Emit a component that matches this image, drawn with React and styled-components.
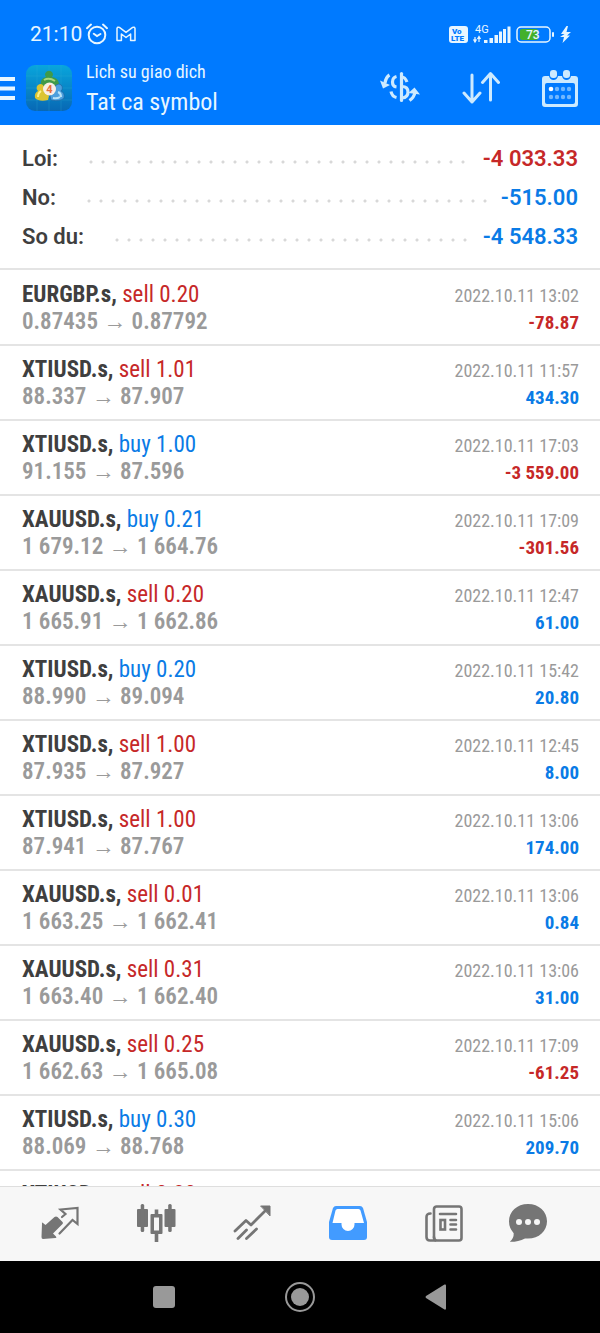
import React from 'react';
import styled, { createGlobalStyle } from 'styled-components';

const condensed = '"Roboto Condensed", "Liberation Sans Narrow", Roboto, sans-serif';
const colors = { header: '#007aff', red: '#c62828', blue: '#0a7be6', ink: '#3f3f3f', grey: '#9a9a9a', icon: '#757575', line: '#e4e4e4' };

const GlobalStyle = createGlobalStyle`
  * { box-sizing: border-box; }
  body { margin: 0; background: #fff; font-family: Roboto, sans-serif; }
  button { border: 0; padding: 0; margin: 0; background: none; color: inherit; font: inherit; cursor: pointer; }
  svg { display: block; }
`;

const Screen = styled.div`
  display: flex;
  flex-direction: column;
  height: 100vh;
  overflow: hidden;
`;

const Header = styled.header`
  flex: none;
  background: ${colors.header};
  color: #e8f6ff;
  height: 125px;
  padding-top: 22px;
`;

const StatusBar = styled.div`
  display: flex;
  align-items: center;
  justify-content: space-between;
  height: 24px;
  padding: 0 29px 0 30px;
`;

const StatusGroup = styled.div`
  display: flex;
  align-items: center;
  gap: ${(p) => p.$gap}px;
`;

const Clock = styled.time`
  margin-right: -4px;
  font-size: 21px;
  line-height: 24px;
`;

const AppBar = styled.div`
  display: flex;
  align-items: center;
  height: 64px;
  margin-top: 10px;
  padding-right: 22px;
`;

const MenuButton = styled.button`
  width: 26px;
  height: 46px;
`;

const Titles = styled.div`
  flex: 1;
  padding-left: 14px;
  font-family: ${condensed};
`;

const Caption = styled.div`
  font-size: 18px;
  line-height: 28px;
`;

const Title = styled.h1`
  margin: 0;
  font-size: 24px;
  font-weight: 400;
  line-height: 32px;
`;

const Actions = styled.div`
  display: flex;
  align-items: center;
  gap: 42px;
`;

const Summary = styled.dl`
  flex: none;
  margin: 0;
  padding: 14px 22px 12px;
  border-bottom: 2px solid ${colors.line};
`;

const SummaryRow = styled.div`
  display: flex;
  align-items: center;
  height: 39px;
  font-size: 22px;
  font-weight: 600;
`;

const SummaryLabel = styled.dt`
  color: ${colors.ink};
`;

const Dots = styled.span`
  flex: 1;
  height: 4px;
  margin: 6px 12px 0 27px;
  background: radial-gradient(circle, #d8d8d8 0 1px, transparent 2px) 0 0 / 12px 4px repeat-x;
`;

const SummaryValue = styled.dd`
  margin: 0;
  color: ${(p) => colors[p.$tone]};
`;

const History = styled.ul`
  flex: 1;
  min-height: 0;
  overflow: hidden;
  margin: 0;
  padding: 1px 0 0;
  list-style: none;
  font-family: ${condensed};
`;

const Deal = styled.li`
  display: flex;
  justify-content: space-between;
  height: 75px;
  padding: 11px 21px 0 22px;
  border-bottom: 2px solid ${colors.line};
`;

const DealSide = styled.div`
  text-align: ${(p) => p.$align || 'left'};
`;

const Symbol = styled.div`
  font-size: 23px;
  line-height: 26px;
  color: ${(p) => colors[p.$tone]};
  strong { color: ${colors.ink}; font-weight: 700; }
`;

const Prices = styled.div`
  font-size: 23px;
  line-height: 27px;
  font-weight: 600;
  color: ${colors.grey};
`;

const Stamp = styled.time`
  display: block;
  font-size: 18px;
  line-height: 27px;
  color: ${colors.grey};
`;

const Profit = styled.div`
  font-size: 19px;
  line-height: 27px;
  font-weight: 700;
  color: ${(p) => colors[p.$tone]};
`;

const TabBar = styled.nav`
  flex: none;
  display: grid;
  grid-template-columns: 4fr 4fr 4fr 4fr 4fr 3fr;
  height: 75px;
  padding: 0 36px 2px 12px;
  background: #f7f7f7;
  border-top: 1px solid #dedede;
`;

const Tab = styled.button`
  display: flex;
  align-items: center;
  justify-content: center;
  color: ${(p) => (p.$active ? '#429bff' : colors.icon)};
`;

const SystemBar = styled.nav`
  flex: none;
  display: grid;
  grid-template-columns: repeat(3, 1fr);
  height: 72px;
  padding: 0 96px;
  background: #000;
`;

const SystemButton = styled.button`
  display: flex;
  align-items: center;
  justify-content: center;
  color: #999;
`;

const AlarmIcon = () => (
  <svg width="22" height="22" viewBox="0 0 22 22" fill="none" stroke="currentColor" strokeWidth="2" strokeLinecap="round">
    <circle cx="11" cy="12" r="8.3" />
    <path d="M1 5.2 5 1.6M21 5.2 17 1.6M7.8 10.8 11 13l3.4-2" />
  </svg>
);

const MailIcon = () => (
  <svg width="20" height="16" viewBox="0 0 20 16" fill="none" stroke="currentColor" strokeWidth="1.5" strokeLinejoin="round">
    <path d="M1 14.5V2.5Q1.4.6 3.4 1.4L10 6.4l6.600-5Q18.600.6 19 2.500V14.500H14.600V8L10 11.500 5.400 8V14.500Z" />
  </svg>
);

const VolteIcon = () => (
  <svg width="19" height="17" viewBox="0 0 19 17">
    <rect width="19" height="17" rx="3" fill="currentColor" />
    <text x="3" y="8" fontFamily="Roboto" fontWeight="900" fontSize="8" fill="#007aff">Vo</text>
    <text x="2" y="15" fontFamily="Roboto" fontWeight="900" fontSize="8" fill="#007aff">LTE</text>
  </svg>
);

const SignalIcon = () => (
  <svg width="38" height="20" viewBox="0 0 38 20" fill="currentColor">
    <text x="2" y="9" fontFamily="Roboto" fontSize="11">4G</text>
    <path d="M2 13v4M0.500 15.500 2 18l1.500-2.500M6 18v-5M4.500 15 6 12.500 7.500 15" stroke="currentColor" strokeWidth="1.200" />
    <path d="M11 16h3.500v3H11zM16.500 14H20v5h-3.500zM21.500 11H25v8h-3.500zM26 7.500h3V19h-3zM30 5h3v14h-3zM34.500 2.500h3V19h-3z" />
  </svg>
);

const BatteryIcon = () => (
  <svg width="39" height="17" viewBox="0 0 39 17">
    <rect x="1" y="1" width="33" height="15" rx="4" fill="none" stroke="currentColor" strokeWidth="1.500" />
    <rect x="4" y="3" width="18" height="11" rx="2" fill="#43b02a" />
    <rect x="36" y="6" width="2" height="5" rx="1" fill="currentColor" />
    <text x="10" y="13" fontFamily="Roboto" fontWeight="500" fontSize="12" fill="currentColor">73</text>
  </svg>
);

const BoltIcon = () => (
  <svg width="11" height="17" viewBox="0 0 11 17" fill="currentColor">
    <path d="M6.500 0 1 8h3.500L0 11h4L2.500 17 10 9.500H7L11 6H6.500L8 0Z" />
  </svg>
);

const MenuIcon = () => (
  <svg width="15" height="23" viewBox="0 0 15 23" fill="currentColor">
    <path d="M0 0h15v4H0zM0 9.500h15v4H0zM0 19h15v4H0z" />
  </svg>
);

const AppLogo = () => (
  <svg width="46" height="46" viewBox="0 0 46 46" role="img" aria-label="MetaTrader 4">
    <defs>
      <linearGradient id="tile" x1="0" y1="0" x2="0" y2="1">
        <stop offset="0" stopColor="#08a6dc" />
        <stop offset="1" stopColor="#0868b4" />
      </linearGradient>
    </defs>
    <rect width="46" height="46" rx="9" fill="url(#tile)" />
    <path d="M11 0v46M23 0v46M35 0v46M0 11h46M0 23h46M0 35h46" stroke="#35b0dd" strokeOpacity=".25" />
    <path d="M15 20q-1-7 5-8a3.800 3.800 0 1 1 6 0q7 1 7 8l-2 5H17Z" fill="#3f9a49" />
    <path d="M18 15q5-3 11 1" stroke="#a7d67c" strokeWidth="2" fill="none" />
    <path d="M9 33q-1-5 3-7a4 4 0 0 1 2-7q4 0 4 4l5 8-1 4Q13 37 9 33Z" fill="#dcc431" />
    <path d="M12 32q0-4 3-6" stroke="#fff08a" strokeWidth="2" fill="none" />
    <path d="M38 33q1-5-3-7a4 4 0 0 0-2-7q-4 0-4 4l-5 8 1 4q9 2 13-2Z" fill="#4c9fdd" stroke="#1f5f9c" strokeWidth=".6" />
    <path d="M35 32q0-4-3-5M27 33q4 1 7-1" stroke="#b9e2f8" strokeWidth="2" fill="none" />
    <circle cx="23.500" cy="24" r="6.500" fill="#f7eee5" />
    <text x="23.500" y="28" textAnchor="middle" fontFamily="Roboto" fontWeight="700" fontSize="11" fill="#e8703a">4</text>
  </svg>
);

const CurrencyIcon = () => (
  <svg width="40" height="36" viewBox="0 0 40 36" fill="none" stroke="#cdeaff" strokeWidth="3.200">
    <path d="M21.500 3.500v27" strokeLinecap="round" strokeWidth="3.200" />
    <path d="M22 7q3 0 5 5M22 16.500q6 0 6 5.500t-6 6M16.500 6.500q-4 1-4 5.500t4 5M11 21.500q1 5 5.500 6" />
    <path d="M9.500 5Q6 7 5 13M29.500 30.500q4.500-3 5.500-8" />
    <path d="m0 10.500 3 8 7-3.500ZM28.500 23l6-5.500 5.500 7Z" fill="#cdeaff" stroke="none" />
  </svg>
);

const SortIcon = () => (
  <svg width="38" height="34" viewBox="0 0 38 34" fill="none" stroke="#cdeaff" strokeWidth="3" strokeLinecap="round" strokeLinejoin="round">
    <path d="M10 4v27M2 22l8 9 8-9M28.500 29V3M20.500 11.500l8-9 8 9" />
  </svg>
);

const CalendarIcon = () => (
  <svg width="36" height="38" viewBox="0 0 36 38" fill="#cdeaff">
    <path fillRule="evenodd" d="M3 7h4q1 4 4.500 4T16 7h4q1 4 4.500 4T29 7h4q3 0 3 3v25q0 3-3 3H3q-3 0-3-3V10q0-3 3-3Zm2 7q-2 0-2 2v17q0 2 2 2h26q2 0 2-2V16q0-2-2-2Z" />
    <rect x="8" y="1" width="7" height="8" rx="3" />
    <rect x="21" y="1" width="7" height="8" rx="3" />
    <circle cx="9" cy="20" r="2.300" fill="#fff" />
    <g opacity=".55">
      {[15, 21, 27].map((x) => <circle key={x} cx={x} cy="20" r="2.200" />)}
      {[9, 15, 21, 27].map((x) => <circle key={x} cx={x} cy="28" r="2.200" />)}
    </g>
  </svg>
);

const QuotesIcon = () => (
  <svg width="38" height="34" viewBox="0 0 38 34">
    <path d="M1 17.500Q.500 16 2 17l2.500 2L13.500 11q1.500-1 3 0l5 5q1 1 0 2L12 27.500l3 3q1 1.500-.500 1.500L2 33Q.500 33 .500 31Z" fill="currentColor" />
    <path d="M21 11 24.500 8 19.500 3.500 36.500 2v16L31.500 14 18.500 27.500" fill="none" stroke="currentColor" strokeWidth="2.200" strokeLinecap="round" />
  </svg>
);

const ChartIcon = () => (
  <svg width="40" height="38" viewBox="0 0 40 38" fill="currentColor">
    <rect x="1" y="5" width="11" height="18" rx="1" />
    <rect x="28.500" y="5" width="11" height="18" rx="1" />
    <rect x="4.700" y="0" width="3.500" height="28" rx="1.500" />
    <rect x="32.200" y="0" width="3.500" height="28" rx="1.500" />
    <path fillRule="evenodd" d="M15.500 10h10q1 0 1 1v18q0 1-1 1h-10q-1 0-1-1V11q0-1 1-1Zm2.500 3.500v13h5v-13Z" />
    <path d="M18.700 5.500h3.600V11h-3.600zM18.700 29h3.600v9h-3.600z" />
  </svg>
);

const TradeIcon = () => (
  <svg width="38" height="36" viewBox="0 0 38 36" fill="none" stroke="currentColor" strokeWidth="2.800" strokeLinecap="round" strokeLinejoin="round">
    <path d="M2 26 13 15.500 18 20 34 4" />
    <path d="M5 33.500 13.500 25M13.500 33.500 23.500 24" />
    <path d="M28 1h9v9.500Z" fill="currentColor" strokeWidth="1" />
  </svg>
);

const HistoryIcon = () => (
  <svg width="38" height="34" viewBox="0 0 38 34">
    <path d="M7 0h24q2 0 3 2l4 14v15q0 3-3 3H3q-3 0-3-3V16L4 2Q5 0 7 0Z" fill="currentColor" />
    <path d="M8.500 3h21q1.500 0 2 1.500L35 17h-9.500v1.500a6.500 6.500 0 0 1-13 0V17H3.500L6.500 4.500Q7 3 8.500 3Z" fill="#fff" />
  </svg>
);

const NewsIcon = () => (
  <svg width="38" height="37" viewBox="0 0 38 37" fill="none" stroke="currentColor" strokeWidth="2.600" strokeLinecap="round">
    <rect x="9" y="1.500" width="27.500" height="34" rx="2.500" />
    <path d="M5.500 8.500Q1.500 8.500 1.500 12v20q0 3.500 3.500 3.500h6q-2-1-2-3.500" />
    <path d="M15 9h16M25.500 15h5.500M25.500 19.500h5.500M25.500 24.500h5.500" />
    <rect x="15.500" y="15" width="4.500" height="9.500" />
  </svg>
);

const ChatIcon = () => (
  <svg width="38" height="38" viewBox="0 0 38 38">
    <path d="M19 0c11 0 19 7.500 19 17.300S30 34.600 19 34.600q-1.500 0-3-.200Q9 38 .800 37.800 5 34 4.700 29.200 0 24 0 17.300C0 7.500 8 0 19 0Z" fill="currentColor" />
    <circle cx="10" cy="18" r="3" fill="#f7f7f7" />
    <circle cx="19" cy="18" r="3" fill="#f7f7f7" />
    <circle cx="28" cy="18" r="3" fill="#f7f7f7" />
  </svg>
);

const RecentsIcon = () => (
  <svg width="22" height="22" fill="currentColor"><rect width="22" height="22" rx="3" /></svg>
);

const HomeIcon = () => (
  <svg width="30" height="30" fill="currentColor">
    <circle cx="15" cy="15" r="14" fill="none" stroke="currentColor" strokeWidth="2" />
    <circle cx="15" cy="15" r="9" />
  </svg>
);

const BackIcon = () => (
  <svg width="22" height="26" fill="currentColor"><path d="M1 12Q0 13 1 14L19.500 25.500Q21 26 21 24.500V1.500Q21 0 19.500.500Z" /></svg>
);

const summary = [
  ['Loi:', '-4 033.33', 'red'],
  ['No:', '-515.00', 'blue'],
  ['So du:', '-4 548.33', 'blue'],
];

const deals = [
  ['EURGBP.s', 'sell 0.20', '0.87435', '0.87792', '13:02', '-78.87'],
  ['XTIUSD.s', 'sell 1.01', '88.337', '87.907', '11:57', '434.30'],
  ['XTIUSD.s', 'buy 1.00', '91.155', '87.596', '17:03', '-3 559.00'],
  ['XAUUSD.s', 'buy 0.21', '1 679.12', '1 664.76', '17:09', '-301.56'],
  ['XAUUSD.s', 'sell 0.20', '1 665.91', '1 662.86', '12:47', '61.00'],
  ['XTIUSD.s', 'buy 0.20', '88.990', '89.094', '15:42', '20.80'],
  ['XTIUSD.s', 'sell 1.00', '87.935', '87.927', '12:45', '8.00'],
  ['XTIUSD.s', 'sell 1.00', '87.941', '87.767', '13:06', '174.00'],
  ['XAUUSD.s', 'sell 0.01', '1 663.25', '1 662.41', '13:06', '0.84'],
  ['XAUUSD.s', 'sell 0.31', '1 663.40', '1 662.40', '13:06', '31.00'],
  ['XAUUSD.s', 'sell 0.25', '1 662.63', '1 665.08', '17:09', '-61.25'],
  ['XTIUSD.s', 'buy 0.30', '88.069', '88.768', '15:06', '209.70'],
  ['XTIUSD.s', 'sell 0.20', '', '', '', ''],
];

const tabs = [
  ['Quotes', QuotesIcon],
  ['Chart', ChartIcon],
  ['Trade', TradeIcon],
  ['History', HistoryIcon],
  ['News', NewsIcon],
  ['Messages', ChatIcon],
];

export default function App() {
  return (
    <Screen>
      <GlobalStyle />
      <Header>
        <StatusBar>
          <StatusGroup $gap={8}>
            <Clock>21:10</Clock>
            <AlarmIcon />
            <MailIcon />
          </StatusGroup>
          <StatusGroup $gap={5}>
            <VolteIcon />
            <SignalIcon />
            <BatteryIcon />
            <BoltIcon />
          </StatusGroup>
        </StatusBar>
        <AppBar>
          <MenuButton aria-label="Menu"><MenuIcon /></MenuButton>
          <AppLogo />
          <Titles>
            <Caption>Lich su giao dich</Caption>
            <Title>Tat ca symbol</Title>
          </Titles>
          <Actions>
            <button aria-label="Currency"><CurrencyIcon /></button>
            <button aria-label="Sort"><SortIcon /></button>
            <button aria-label="Period"><CalendarIcon /></button>
          </Actions>
        </AppBar>
      </Header>
      <Summary>
        {summary.map(([label, value, tone]) => (
          <SummaryRow key={label}>
            <SummaryLabel>{label}</SummaryLabel>
            <Dots />
            <SummaryValue $tone={tone}>{value}</SummaryValue>
          </SummaryRow>
        ))}
      </Summary>
      <History>
        {deals.map(([symbol, order, open, close, time, profit], i) => (
          <Deal key={i}>
            <DealSide>
              <Symbol $tone={order.startsWith('buy') ? 'blue' : 'red'}><strong>{symbol},</strong> {order}</Symbol>
              {open && <Prices>{open} → {close}</Prices>}
            </DealSide>
            {time && (
              <DealSide $align="right">
                <Stamp>2022.10.11 {time}</Stamp>
                <Profit $tone={profit.startsWith('-') ? 'red' : 'blue'}>{profit}</Profit>
              </DealSide>
            )}
          </Deal>
        ))}
      </History>
      <TabBar>
        {tabs.map(([label, Icon]) => (
          <Tab key={label} aria-label={label} $active={label === 'History'}><Icon /></Tab>
        ))}
      </TabBar>
      <SystemBar>
        <SystemButton aria-label="Recents"><RecentsIcon /></SystemButton>
        <SystemButton aria-label="Home"><HomeIcon /></SystemButton>
        <SystemButton aria-label="Back"><BackIcon /></SystemButton>
      </SystemBar>
    </Screen>
  );
}
